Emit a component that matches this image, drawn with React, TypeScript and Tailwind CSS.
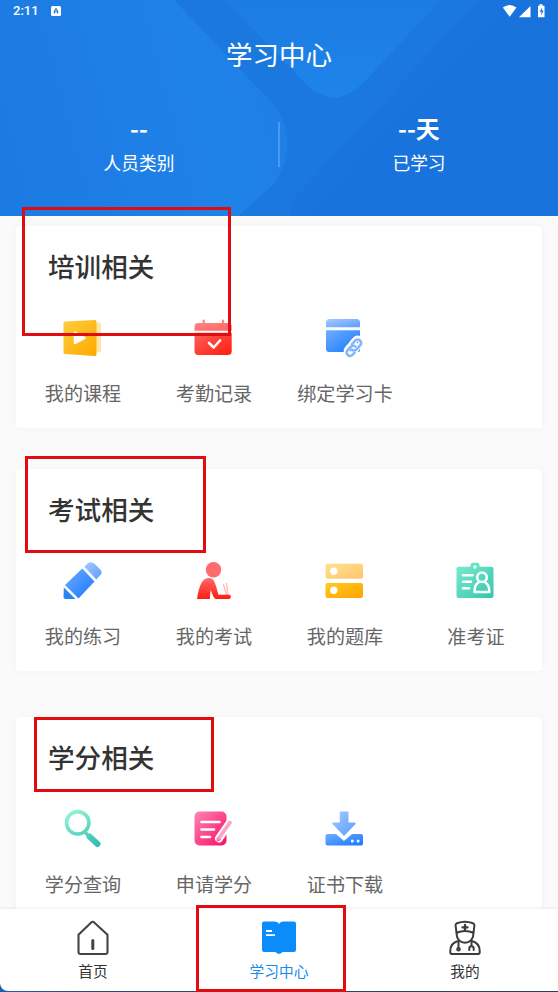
import type { ReactNode } from "react";

interface Entry {
  label: string;
  icon: ReactNode;
}

interface Section {
  title: string;
  className: string;
  entries: Entry[];
}

// shared gradients, referenced by id from the icons
function Gradients() {
  const list = [
    ["yellow", "#fdce3e", "#ffa800"],
    ["paleYellow", "#ffe28c", "#ffc470"],
    ["amber", "#ffcb1f", "#ffa300"],
    ["red", "#ff6060", "#ff1c0c"],
    ["paleRed", "#ff8484", "#ff6464"],
    ["blue", "#6fadff", "#1677ff"],
    ["paleBlue", "#a6cbff", "#5b9cff"],
    ["teal", "#7aeccb", "#35c6b2"],
    ["pink", "#ff86b4", "#fb0b68"],
  ];
  return (
    <svg className="absolute size-0">
      <defs>
        {list.map(([id, from, to]) => (
          <linearGradient key={id} id={id} x1="0" y1="0" x2="1" y2="1">
            <stop offset="0" stopColor={from} />
            <stop offset="1" stopColor={to} />
          </linearGradient>
        ))}
        <linearGradient id="redDown" x1="0" y1="0" x2="0" y2="1">
          <stop offset="0" stopColor="#ff6a68" />
          <stop offset="1" stopColor="#ff1c10" />
        </linearGradient>
        <linearGradient id="glass" gradientUnits="userSpaceOnUse" x1="10" y1="2" x2="30" y2="38">
          <stop offset="0" stopColor="#92f3d3" />
          <stop offset="1" stopColor="#39beb4" />
        </linearGradient>
      </defs>
    </svg>
  );
}

function Icon({ children }: { children: ReactNode }) {
  return (
    <svg viewBox="0 0 40 40" className="mr-px size-10" fill="none" strokeLinecap="round" strokeLinejoin="round">
      {children}
    </svg>
  );
}

const sections: Section[] = [
  {
    title: "培训相关",
    className: "",
    entries: [
      {
        label: "我的课程",
        icon: (
          <Icon>
            <path d="M30 4.500h7.500q1.500 0 1.500 1.500v27q0 1.500-1.500 1.500H30z" fill="#ffe5a0" />
            <path d="M3 3.500 33 2q1.500 0 1.500 1.500v33q0 1.500-1.500 1.500L3 36q-1.500 0-1.500-1.500V5q0-1.500 1.500-1.500z" fill="url(#yellow)" />
            <path d="M13 14.500v10.500L22.500 20z" fill="#fff" stroke="#fff" strokeWidth="2.500" />
          </Icon>
        ),
      },
      {
        label: "考勤记录",
        icon: (
          <Icon>
            <path d="M10.700 2.700v4M30 2.700v4" stroke="#ff8282" strokeWidth="2.200" />
            <path d="M1.500 12.700V8.700q0-3.700 3.500-3.700h30.200q3.500 0 3.500 3.700v4z" fill="url(#paleRed)" />
            <path d="M1.500 14.700h37.200v18.500q0 3.700-4 3.700H5.500q-4 0-4-3.700z" fill="url(#red)" />
            <path d="m16 25 4.700 4.500 6.300-7" stroke="#fff" strokeWidth="2.600" />
          </Icon>
        ),
      },
      {
        label: "绑定学习卡",
        icon: (
          <Icon>
            <path d="M2 9.200V4.500Q2 1 5.500 1h27Q36 1 36 4.500v4.700z" fill="url(#paleBlue)" />
            <path d="M2 12.200h34V32q0 2-2 2H5q-3 0-3-3z" fill="url(#blue)" />
            <g stroke="#fff" strokeWidth="6">
              <rect x="-5.500" y="-3.500" width="11" height="7" rx="3.500" transform="translate(32.500 25.500) rotate(-48)" />
              <rect x="-5.500" y="-3.500" width="11" height="7" rx="3.500" transform="translate(27.500 31.500) rotate(-48)" />
            </g>
            <g stroke="#85b6fb" strokeWidth="2.600">
              <path d="m28 26.200 3.200-3.500a3.400 3.400 0 0 1 5 4.700l-3.600 4a3.400 3.400 0 0 1-4.900.1" />
              <path d="M31.500 28.700a3.400 3.400 0 0 0-4.900.1l-3.100 3.500a3.400 3.400 0 0 0 5 4.600l2-2.200" />
            </g>
          </Icon>
        ),
      },
    ],
  },
  {
    title: "考试相关",
    className: "mt-[41px]",
    entries: [
      {
        label: "我的练习",
        icon: (
          <Icon>
            <path d="m22.300 5.700 3-3q1.700-1.500 3.700-1.500t3.500 1.500l5.500 5.500q2.500 2.500 1 5L34.300 18.500z" fill="url(#paleBlue)" />
            <path d="M20.300 7.500 32.500 20.500 16.500 37.500 3 24z" fill="url(#blue)" />
            <path d="M1.800 26.500 13.500 38H3.500q-2 0-2-2z" fill="#2c82fb" />
          </Icon>
        ),
      },
      {
        label: "我的考试",
        icon: (
          <Icon>
            <circle cx="20.500" cy="8.700" r="7.700" fill="#ff6c6d" />
            <path d="M30.500 23.500 33.500 34M33.500 22.500l1.500 11.500" stroke="#ffb8b6" strokeWidth="1.300" />
            <path d="M4 38c1-7 2.500-13 5-17 3-5 10-5.500 12-1 2 4 3 9 4.500 13.700h11c2 0 2 4.300-1 4.300H23c-1.800 0-3.700-4.500-5.200-9-.7 2.500-.8 6-.8 9z" fill="url(#redDown)" />
          </Icon>
        ),
      },
      {
        label: "我的题库",
        icon: (
          <Icon>
            <rect x="1.500" y="2.700" width="37.500" height="15" rx="2.200" fill="url(#paleYellow)" />
            <rect x="1.500" y="22" width="37.500" height="15" rx="2.200" fill="url(#amber)" />
            <circle cx="9.800" cy="10.200" r="3.700" fill="#fff" />
            <circle cx="9.800" cy="29.200" r="3.700" fill="#fff" />
          </Icon>
        ),
      },
      {
        label: "准考证",
        icon: (
          <Icon>
            <path d="M3.500 5.700h12v-1q0-3 2.500-3h4q2.500 0 2.500 3v1h12q2 0 2 2V35q0 2-2 2h-33q-2 0-2-2V7.700q0-2 2-2z" fill="url(#teal)" />
            <circle cx="20" cy="6" r="1.700" fill="#fff" />
            <path d="M8 14.200h9.500M8 20.700h8M8 27.200h6" stroke="#fff" strokeWidth="2.500" />
            <circle cx="27" cy="16.200" r="4.800" stroke="#fff" strokeWidth="2.500" />
            <path d="M24 21.200q-4.500 2-4.500 9.700h14.800q0-7.700-4.500-9.700" stroke="#fff" strokeWidth="2.500" />
          </Icon>
        ),
      },
    ],
  },
  {
    title: "学分相关",
    className: "mt-[46px]",
    entries: [
      {
        label: "学分查询",
        icon: (
          <Icon>
            <circle cx="15.700" cy="13.800" r="11.200" stroke="url(#glass)" strokeWidth="3.600" />
            <path d="m23.500 23.500 3 3.500" stroke="url(#glass)" strokeWidth="3.400" />
            <path d="m27.500 27.500 8 7.500" stroke="url(#glass)" strokeWidth="6" />
          </Icon>
        ),
      },
      {
        label: "申请学分",
        icon: (
          <Icon>
            <rect x="1.500" y="2.500" width="32" height="34" rx="5" fill="url(#pink)" />
            <path d="M8.500 13h18M8.500 20.500h12.500M8.500 28h8.500" stroke="#fff" strokeWidth="2.600" />
            <path d="M37 13.500 26 29.500" stroke="#fff" strokeWidth="8" />
            <path d="M37 13.500 26 29" stroke="#ffa3c6" strokeWidth="3.800" />
            <path d="m24.500 29-.3 3 3-1.500" stroke="#ff73aa" strokeWidth="1.500" />
          </Icon>
        ),
      },
      {
        label: "证书下载",
        icon: (
          <Icon>
            <path d="M3.500 25h8.500l8 7 8-7h9q2 0 2 2v7.500q0 2-2 2h-33.500q-2 0-2-2V27q0-2 2-2z" fill="url(#blue)" />
            <path d="M15.800 2.500h8.700v11H30.500q2 0 .8 1.800L20 27 8.700 15.300Q7.300 13.500 9.300 13.500h6.500z" fill="url(#paleBlue)" />
            <circle cx="28.300" cy="32" r="1.500" fill="#fff" />
            <circle cx="34.100" cy="32" r="1.500" fill="#fff" />
          </Icon>
        ),
      },
    ],
  },
];

const tabs = [
  {
    label: "首页",
    active: false,
    icon: (
      <svg viewBox="0 0 36 36" className="size-9" fill="none" stroke="#444" strokeWidth="2.100" strokeLinecap="round" strokeLinejoin="round">
        <path d="M3.500 14.800 16.200 2.400q1.500-1.300 3 0l13.300 12.400V32q0 2-2 2h-25q-2 0-2-2z" />
        <path d="M17.800 20.500v8" strokeWidth="3" />
      </svg>
    ),
  },
  {
    label: "学习中心",
    active: true,
    icon: (
      <svg viewBox="0 0 36 36" className="size-9">
        <path d="M3 1.500h10.500q3.500 0 4.500 2.700 1-2.700 4.500-2.700H33q2 0 2 2V30q0 2-2 2H22.500q-1.500 0-2.500 1.200-2 1.200-4 0-1-1.200-2.500-1.200H3q-2 0-2-2V3.500q0-2 2-2z" fill="#0a8dfa" />
        <path d="M5 11h6M5 15.200h9" stroke="#fff" strokeWidth="1.800" />
      </svg>
    ),
  },
  {
    label: "我的",
    active: false,
    icon: (
      <svg viewBox="0 0 36 36" className="size-9" fill="none" stroke="#3c3c3c" strokeWidth="2" strokeLinecap="round" strokeLinejoin="round">
        <path d="M9.500 12.700 8.600 5.500q-.2-1.600 1.400-2.300 8-3 16 0 1.600.7 1.400 2.300l-.9 7.200q-8.500-3.200-17 0z" />
        <path d="M18 4.900v5M15.500 7.400h5" strokeWidth="2.300" />
        <path d="M9.700 12.500v2.200a8.300 8 0 0 0 16.600 0v-2.200" />
        <path d="M12 20.800q-8.700 2-8.700 10.200v1.200q0 1.800 2 1.800h25.400q2 0 2-1.800V31q0-8.200-8.700-10.200" />
        <path d="M11.500 22v6M24.500 22v4M22.300 30v-1.500q0-2.200 2.200-2.200t2.200 2.200V30" />
        <circle cx="11.500" cy="29.300" r="1.300" />
      </svg>
    ),
  },
];

function StatusBar() {
  return (
    <div className="relative flex h-[22px] items-center justify-between pr-3 pl-[13px] font-[Roboto,sans-serif] text-[13px] text-white">
      <div className="flex items-center gap-[12px]">
        <span className="font-medium">2:11</span>
        <svg viewBox="0 0 10 10" className="size-2.5">
          <rect width="10" height="10" rx="1.500" fill="#fff" />
          <path d="M3.400 7.500V5L5 2.800 6.600 5v2.500M3.400 5.800h3.200" fill="none" stroke="#2878c8" strokeWidth="1.100" />
        </svg>
      </div>
      <svg viewBox="0 0 44 14" className="h-[14px] w-[44px]" fill="#fff">
        <path d="M.800 3.500Q7.500-1.500 14.500 3.500L7.700 12.800z" />
        <path d="M28.500 2v11.300H17z" />
        <path d="M36 1.700h1.500V.2h3v1.500H42.500v11.600H36z" />
        <path d="m40.200 3.500-2.600 4.300h1.800v3.500l2.200-4.800h-1.600z" fill="#1973dc" />
      </svg>
    </div>
  );
}

function Header() {
  return (
    <header className="relative h-[216px] shrink-0 bg-[#1b78df] text-white">
      <svg viewBox="0 0 558 216" className="absolute inset-0 h-full w-full">
        <defs>
          <linearGradient id="left" x1="0" y1="0.600" x2="1" y2="0.400">
            <stop offset="0" stopColor="#1c7ae3" />
            <stop offset="0.700" stopColor="#1f82e8" />
            <stop offset="1" stopColor="#1e80e6" />
          </linearGradient>
          <linearGradient id="top" x1="0" y1="0" x2="0" y2="1">
            <stop offset="0" stopColor="#1c7ce3" />
            <stop offset="1" stopColor="#1e84e9" />
          </linearGradient>
          <linearGradient id="right" gradientUnits="userSpaceOnUse" x1="375" y1="100" x2="400" y2="124">
            <stop offset="0" stopColor="#1a75de" />
            <stop offset="1" stopColor="#1973dc" />
          </linearGradient>
        </defs>
        <path d="M0 0H174L274 105Q301 143 274 184L238 216H0z" fill="url(#left)" />
        <path d="M225 0H441L364 82Q335 112 306 84z" fill="url(#top)" />
        <path d="M290 216Q291 203 298 194L478 0H558V216z" fill="url(#right)" />
      </svg>
      <StatusBar />
      <h1 className="relative mt-[12px] text-center text-[26.500px] leading-[40px]">学习中心</h1>
      <div className="relative mt-[39px] flex items-center">
        <div className="flex-1 text-center">
          <div className="text-[24px] leading-[30px] font-bold">--</div>
          <div className="mt-[6px] text-[17.700px] leading-[26px]">人员类别</div>
        </div>
        <div className="h-[45px] w-[2px] bg-[#479aee]" />
        <div className="flex-1 text-center">
          <div className="text-[24px] leading-[30px] font-bold">--天</div>
          <div className="mt-[6px] text-[17.700px] leading-[26px]">已学习</div>
        </div>
      </div>
    </header>
  );
}

function Card({ title, className, entries }: Section) {
  return (
    <section className={`${className} h-[202px] shrink-0 rounded-[4px] bg-white px-px pt-[20px] shadow-[0_0_8px_rgba(0,0,0,0.035)]`}>
      <h2 className="pl-[31px] text-[26.600px] leading-[40px] font-medium text-[#333]">{title}</h2>
      <div className="mt-[32px] grid grid-cols-4">
        {entries.map((entry) => (
          <div key={entry.label} className="flex flex-col items-center">
            {entry.icon}
            <span className="mt-[20px] ml-px text-[19.100px] leading-[30px] whitespace-nowrap text-[#666]">{entry.label}</span>
          </div>
        ))}
      </div>
    </section>
  );
}

function TabBar() {
  return (
    <nav className="relative h-[83px] shrink-0 bg-linear-to-r from-[#1a5fb8] via-[#2a4a7c] via-15% to-[#2c3e5a] pb-px shadow-[0_-1px_3px_rgba(0,0,0,0.07)]">
      <div className="grid h-full grid-cols-3 rounded-bl-[8px] bg-white">
        {tabs.map((tab) => (
          <div key={tab.label} className="flex flex-col items-center pt-[11px]">
            {tab.icon}
            <span className={`mt-[4px] text-[14.700px] leading-[22px] ${tab.active ? "text-[#168ce8]" : "text-[#333]"}`}>{tab.label}</span>
          </div>
        ))}
      </div>
    </nav>
  );
}

export default function App() {
  return (
    <div className="relative flex h-[992px] w-[558px] flex-col overflow-hidden bg-[#fafafa] font-['Noto_Sans_CJK_SC',sans-serif]">
      <Gradients />
      <Header />
      <main className="flex min-h-0 flex-1 flex-col overflow-hidden px-4 pt-[10px]">
        {sections.map((section) => (
          <Card key={section.title} {...section} />
        ))}
      </main>
      <TabBar />

      {/* highlight boxes */}
      <div className="absolute top-[207px] left-[22px] h-[129px] w-[209px] border-3 border-[#e00c10]" />
      <div className="absolute top-[456px] left-[25px] h-[97px] w-[181px] border-3 border-[#e00c10]" />
      <div className="absolute top-[717px] left-[34px] h-[75px] w-[180px] border-3 border-[#e00c10]" />
      <div className="absolute top-[905px] left-[196px] h-[87px] w-[150px] border-3 border-[#e00c10]" />
    </div>
  );
}
